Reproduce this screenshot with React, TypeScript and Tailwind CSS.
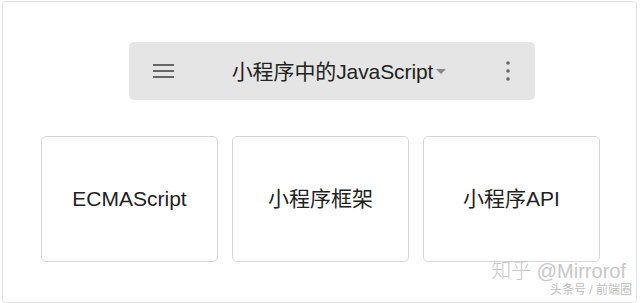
export default function App() {
  const cards = ['ECMAScript', '小程序框架', '小程序API'];

  return (
    <div
      className="w-[640px] h-[303px] bg-white pl-[2px] pt-[1px]"
      style={{ fontFamily: '"Liberation Sans", "Noto Sans CJK SC", sans-serif' }}
    >
      <div className="relative w-[635px] h-[302px] border border-[#e2e2e2] rounded-[4px] overflow-hidden">
        {/* Top bar */}
        <div className="ml-[126px] mt-[40px] w-[406px] h-[58px] bg-[#e5e5e5] rounded-[5px] flex items-center pl-[24px] pr-[24px]">
          <svg width="22" height="16" viewBox="0 0 22 16" className="shrink-0">
            <rect x="0" y="1" width="21" height="2" fill="#666" />
            <rect x="0" y="7" width="21" height="2" fill="#666" />
            <rect x="0" y="13" width="21" height="2" fill="#666" />
          </svg>
          <div className="flex-1 flex items-center justify-center pr-[2px]">
            <span className="text-[21px] text-[#222] leading-none tracking-[-0.1px]">小程序中的JavaScript</span>
            <svg width="10" height="6" viewBox="0 0 10 6" className="ml-[3px] mt-[2px]">
              <path d="M0 0 L10 0 L5 5 Z" fill="#888" />
            </svg>
          </div>
          <svg width="6" height="22" viewBox="0 0 6 22" className="shrink-0">
            <circle cx="3" cy="3" r="1.8" fill="#666" />
            <circle cx="3" cy="11" r="1.8" fill="#666" />
            <circle cx="3" cy="19" r="1.8" fill="#666" />
          </svg>
        </div>

        {/* Cards */}
        <div className="ml-[38px] mt-[36px] flex gap-[14px]">
          {cards.map((c) => (
            <div
              key={c}
              className="w-[177px] h-[126px] border border-[#d6d6d6] rounded-[5px] flex items-center justify-center"
            >
              <span className="text-[21px] text-[#222]">{c}</span>
            </div>
          ))}
        </div>

        {/* Watermark */}
        <div className="absolute right-[10px] top-[259px] flex flex-col items-end leading-none">
          <span className="text-[20px] text-[#c8c8c8] font-light">知乎 @Mirrorof</span>
          <span className="text-[12px] text-[#bdbdbd] mt-[3px] mr-[-6px]">头条号 / 前端圈</span>
        </div>
      </div>
    </div>
  );
}
